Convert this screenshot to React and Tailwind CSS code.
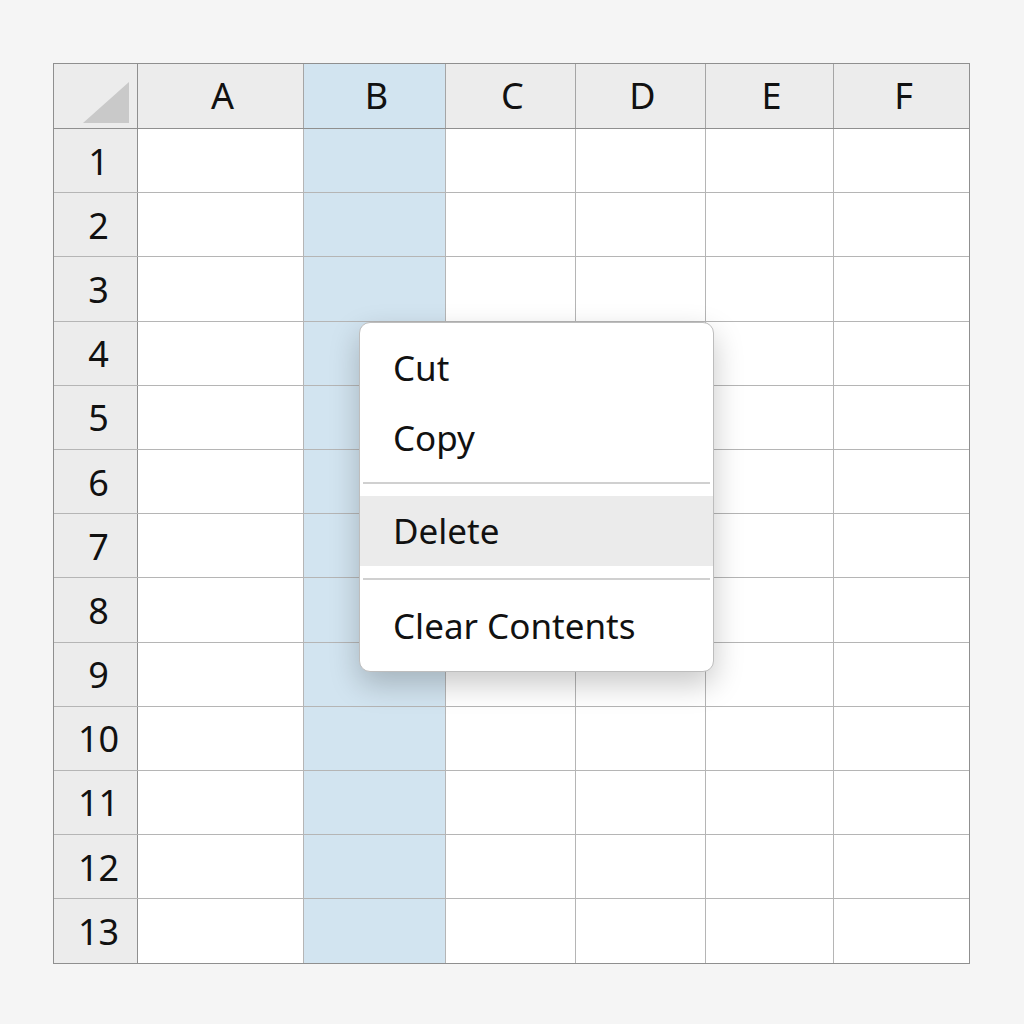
import React from "react";

const cols = ["A", "B", "C", "D", "E", "F"];
const widths = ["w-[166px]", "w-[142px]", "w-[130px]", "w-[130px]", "w-[128px]", "w-[135px]"];
const rows = Array.from({ length: 13 }, (_, i) => i + 1);

function Item({ children, active }) {
  return (
    <div
      className={
        "h-[70px] flex items-center pl-[33px] text-[35px] text-[#111] " +
        (active ? "bg-[#ebebeb]" : "")
      }
    >
      {children}
    </div>
  );
}

export default function App() {
  return (
    <div
      className="w-[1024px] h-[1024px] bg-[#f5f5f5] pt-[63px] pl-[53px]"
      style={{ fontFamily: '"Noto Sans", "Open Sans", sans-serif' }}
    >
      <div className="relative w-fit border border-[#8f8f8f] bg-white">
        {/* header row */}
        <div className="flex h-[65px] border-b border-[#8f8f8f]">
          <div className="w-[84px] shrink-0 bg-[#ececec] border-r border-[#8f8f8f] flex items-end justify-end pr-[8px] pb-[5px]">
            <svg width="46" height="41" viewBox="0 0 46 41">
              <polygon points="46,0 46,41 0,41" fill="#c9c9c9" />
            </svg>
          </div>
          {cols.map((c, i) => (
            <div
              key={c}
              className={
                widths[i] +
                " shrink-0 flex items-center justify-center pl-[4px] text-[36px] text-[#111] " +
                (i < cols.length - 1 ? "border-r border-[#a5a5a5] " : "") +
                (c === "B" ? "bg-[#d2e4f0]" : "bg-[#ececec]")
              }
            >
              {c}
            </div>
          ))}
        </div>
        {rows.map((r) => (
          <div
            key={r}
            className={
              "flex h-[64.2px] " + (r < 13 ? "border-b border-[#b5b5b5]" : "")
            }
          >
            <div className="w-[84px] shrink-0 bg-[#ececec] border-r border-[#8f8f8f] flex items-center justify-center pl-[6px] pt-[2px] text-[36px] text-[#111]">
              {r}
            </div>
            {cols.map((c, i) => (
              <div
                key={c}
                className={
                  widths[i] +
                  " shrink-0 " +
                  (i < cols.length - 1 ? "border-r border-[#b5b5b5] " : "") +
                  (c === "B" ? "bg-[#d2e4f0]" : "bg-white")
                }
              />
            ))}
          </div>
        ))}

        {/* context menu */}
        <div className="absolute left-[305px] top-[258px] w-[355px] h-[350px] bg-white border border-[#bdbdbd] rounded-[11px] shadow-[0_12px_30px_rgba(0,0,0,0.22)] pt-[10px]">
          <Item>Cut</Item>
          <Item>Copy</Item>
          <div className="h-[23px] flex flex-col">
            <div className="mt-[9px] mx-[3px] h-[2px] bg-[#d0d0d0]" />
          </div>
          <Item active>Delete</Item>
          <div className="h-[25px] flex flex-col">
            <div className="mt-[12px] mx-[3px] h-[2px] bg-[#d0d0d0]" />
          </div>
          <Item>Clear Contents</Item>
        </div>
      </div>
    </div>
  );
}
